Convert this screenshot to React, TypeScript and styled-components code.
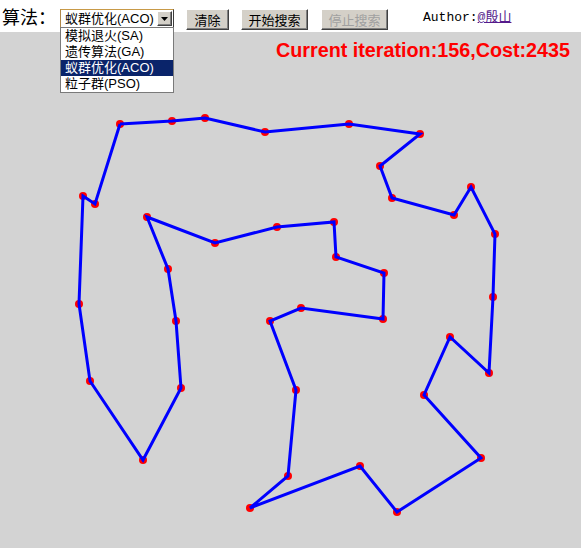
import React from "react";
import styled, { createGlobalStyle } from "styled-components";

const GlobalStyle = createGlobalStyle`
  html, body { margin: 0; padding: 0; background: #ffffff; overflow: hidden; }
  body { font-family: "Liberation Sans", "Noto Sans CJK SC", sans-serif; }
`;

const Page = styled.div`
  width: 581px;
  height: 548px;
  display: flex;
  flex-direction: column;
`;

const Toolbar = styled.div`
  height: 32px;
  flex: none;
  display: flex;
  align-items: flex-start;
  padding-left: 2px;
  position: relative;
  z-index: 2;
`;

const Label = styled.span`
  width: 58px;
  height: 32px;
  display: flex;
  align-items: center;
  font-family: "Noto Sans CJK SC", sans-serif;
  font-size: 18px;
  line-height: 18px;
  color: #000;
`;

const SelectBox = styled.div`
  position: relative;
  margin-top: 9px;
  width: 114px;
  height: 19px;
  box-sizing: border-box;
  border: 1px solid #3c3c3c;
  border-top-color: #c89a48;
  border-left-color: #b0884a;
  background: #fff;
  display: flex;
  align-items: center;
`;

const SelectValue = styled.span`
  flex: 1;
  padding-left: 4px;
  font-family: "Liberation Sans", "Noto Sans CJK SC", sans-serif;
  font-size: 13px;
  line-height: 16px;
  color: #000;
  white-space: nowrap;
`;

const ArrowButton = styled.span`
  width: 15px;
  height: 15px;
  margin-right: 1px;
  box-sizing: border-box;
  background: #d4d0c8;
  border-top: 1px solid #ffffff;
  border-left: 1px solid #ffffff;
  border-right: 1px solid #404040;
  border-bottom: 1px solid #404040;
  box-shadow: inset -1px -1px #808080;
  display: flex;
  align-items: center;
  justify-content: center;
`;

const DropList = styled.ul`
  position: absolute;
  top: 100%;
  left: -1px;
  width: 114px;
  margin: 0;
  padding: 0;
  list-style: none;
  box-sizing: border-box;
  border: 1px solid #7a7a7a;
  background: #fff;
`;

const DropItem = styled.li<{ $active?: boolean }>`
  height: 16px;
  padding-left: 4px;
  font-family: "Liberation Sans", "Noto Sans CJK SC", sans-serif;
  font-size: 13px;
  line-height: 16px;
  white-space: nowrap;
  color: ${(p) => (p.$active ? "#ffffff" : "#000000")};
  background: ${(p) => (p.$active ? "#0a246a" : "transparent")};
`;

const Button = styled.button<{ $w: number; $gap: number }>`
  margin-top: 9px;
  margin-left: ${(p) => p.$gap}px;
  width: ${(p) => p.$w}px;
  height: 21px;
  padding: 0;
  box-sizing: border-box;
  background: #d4d0c8;
  border-top: 1px solid #ffffff;
  border-left: 1px solid #ffffff;
  border-right: 1px solid #404040;
  border-bottom: 1px solid #404040;
  box-shadow: inset -1px -1px #808080;
  font-family: "Noto Sans CJK SC", sans-serif;
  font-size: 13px;
  line-height: 17px;
  color: #000;
  &:disabled {
    color: #a0a0a0;
  }
`;

const Author = styled.span`
  margin-left: 35px;
  margin-top: 10px;
  font-family: "Liberation Mono", "Noto Sans CJK SC", monospace;
  font-size: 13px;
  line-height: 16px;
  color: #000;
`;

const AuthorLink = styled.a`
  color: #551a8b;
  text-decoration: underline;
  font-family: "Liberation Mono", "Noto Sans CJK SC", monospace;
`;

const Canvas = styled.div`
  flex: 1;
  background: #d3d3d3;
  position: relative;
  z-index: 1;
`;

const Chart = styled.svg`
  display: block;
`;

const pts: [number, number][] = [
  [120, 124], [172, 121], [205, 118], [265, 132], [349, 124], [420, 134],
  [380, 166], [392, 198], [454, 215], [471, 187], [495, 234], [493, 297],
  [489, 373], [450, 337], [424, 395], [481, 458], [397, 512], [360, 466],
  [250, 508], [288, 476], [296, 390], [270, 321], [301, 308], [383, 319],
  [384, 273], [336, 257], [334, 222], [277, 227], [215, 243], [147, 217],
  [168, 269], [176, 321], [181, 388], [143, 460], [90, 381], [79, 304],
  [83, 196], [95, 204],
];

export default function App() {
  const top = 32;
  const poly = [...pts, pts[0]].map(([x, y]) => `${x},${y - top}`).join(" ");
  return (
    <>
      <GlobalStyle />
      <Page>
        <Toolbar>
          <Label>算法：</Label>
          <SelectBox>
            <SelectValue>蚁群优化(ACO)</SelectValue>
            <ArrowButton>
              <svg width="7" height="4" viewBox="0 0 7 4">
                <path d="M0 0H7L3.5 4Z" fill="#000" />
              </svg>
            </ArrowButton>
            <DropList>
              <DropItem>模拟退火(SA)</DropItem>
              <DropItem>遗传算法(GA)</DropItem>
              <DropItem $active>蚁群优化(ACO)</DropItem>
              <DropItem>粒子群(PSO)</DropItem>
            </DropList>
          </SelectBox>
          <Button $w={43} $gap={12}>清除</Button>
          <Button $w={67} $gap={12}>开始搜索</Button>
          <Button $w={67} $gap={13} disabled>停止搜索</Button>
          <Author>
            Author:<AuthorLink href="#">@殷山</AuthorLink>
          </Author>
        </Toolbar>
        <Canvas>
          <Chart width="581" height="516" viewBox="0 0 581 516">
            <text
              x="276"
              y={57 - top}
              fill="#ff0000"
              fontFamily="Liberation Sans, Arial, sans-serif"
              fontWeight="bold"
              fontSize="20"
              textLength="294"
              lengthAdjust="spacingAndGlyphs"
            >
              Current iteration:156,Cost:2435
            </text>
            {pts.map(([x, y], i) => (
              <circle key={i} cx={x} cy={y - top} r={4} fill="#ff0000" />
            ))}
            <polyline
              points={poly}
              fill="none"
              stroke="#0000ff"
              strokeWidth={3}
              strokeMiterlimit={4}
            />
          </Chart>
        </Canvas>
      </Page>
    </>
  );
}
